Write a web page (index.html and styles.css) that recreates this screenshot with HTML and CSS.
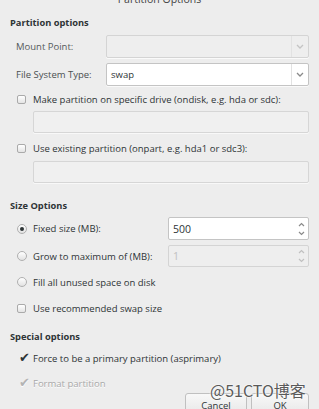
FILE: index.html
```html
<!DOCTYPE html>
<html>
<head>
<meta charset="utf-8">
<link rel="stylesheet" href="styles.css">
</head>
<body>
<div class="dialog">
  <div class="title">Partition Options</div>

  <div class="heading h1">Partition options</div>

  <div class="row r-mount">
    <span class="lbl">Mount Point:</span>
    <div class="combo disabled">
      <span class="combo-text"></span>
      <span class="combo-btn"><svg width="8" height="5" viewBox="0 0 8 5"><path d="M1 1 L4 4 L7 1" fill="none" stroke="#c4c4c4" stroke-width="1.3"/></svg></span>
    </div>
  </div>

  <div class="row r-fs">
    <span class="lbl">File System Type:</span>
    <div class="combo">
      <span class="combo-text">swap</span>
      <span class="combo-btn"><svg width="8" height="5" viewBox="0 0 8 5"><path d="M1 1 L4 4 L7 1" fill="none" stroke="#8a8a8a" stroke-width="1.3"/></svg></span>
    </div>
  </div>

  <div class="opt r-ondisk"><span class="check"></span><span>Make partition on specific drive (ondisk, e.g. hda or sdc):</span></div>
  <div class="entry e1"></div>

  <div class="opt r-onpart"><span class="check"></span><span>Use existing partition (onpart, e.g. hda1 or sdc3):</span></div>
  <div class="entry e2"></div>

  <div class="heading h2">Size Options</div>

  <div class="opt r-fixed">
    <span class="radio on"></span><span class="opt-lbl">Fixed size (MB):</span>
    <div class="spin">
      <span class="spin-text">500</span>
      <span class="spin-arrows"><svg width="7" height="16" viewBox="0 0 7 16"><path d="M1 5 L3.5 2.5 L6 5" fill="none" stroke="#8a8a8a" stroke-width="1.2"/><path d="M1 11 L3.5 13.5 L6 11" fill="none" stroke="#8a8a8a" stroke-width="1.2"/></svg></span>
    </div>
  </div>

  <div class="opt r-grow">
    <span class="radio"></span><span class="opt-lbl">Grow to maximum of (MB):</span>
    <div class="spin disabled">
      <span class="spin-text">1</span>
      <span class="spin-arrows"><svg width="7" height="16" viewBox="0 0 7 16"><path d="M1 5 L3.5 2.5 L6 5" fill="none" stroke="#c0c0c0" stroke-width="1.2"/><path d="M1 11 L3.5 13.5 L6 11" fill="none" stroke="#c0c0c0" stroke-width="1.2"/></svg></span>
    </div>
  </div>

  <div class="opt r-fill"><span class="radio"></span><span>Fill all unused space on disk</span></div>
  <div class="opt r-swap"><span class="check"></span><span>Use recommended swap size</span></div>

  <div class="heading h3">Special options</div>

  <div class="opt r-force"><span class="tick">✔</span><span>Force to be a primary partition (asprimary)</span></div>
  <div class="opt r-format dim"><span class="tick">✔</span><span>Format partition</span></div>

  <div class="buttons">
    <div class="btn b-cancel">Cancel</div>
    <div class="btn b-ok">OK</div>
  </div>
</div>
<div class="watermark">@51CTO博客</div>
</body>
</html>
```

FILE: styles.css
```css
html, body {
  margin: 0;
  padding: 0;
}
body {
  width: 319px;
  height: 409px;
  overflow: hidden;
  background: #ededed;
  font-family: "Open Sans", "Noto Sans", sans-serif;
  font-size: 9.5px;
  color: #2e3436;
  position: relative;
}
.dialog {
  padding: 0 10px;
  display: flex;
  flex-direction: column;
}
.title {
  margin-top: -8px;
  height: 14px;
  line-height: 14px;
  text-align: center;
  color: #444;
  font-size: 10.5px;
}
.heading {
  font-weight: bold;
  height: 12px;
  line-height: 12px;
  color: #2e3436;
  font-size: 9.3px;
}
.h1 { margin-top: 11px; }
.h2 { margin-top: 17px; }
.h3 { margin-top: 15px; }

.row {
  display: flex;
  align-items: center;
  height: 23px;
}
.r-mount { margin-top: 6px; }
.r-fs { margin-top: 5px; }
.lbl {
  width: 90px;
  margin-left: 6px;
  color: #4a4f50;
}
.r-mount .lbl { color: #555a5b; }

.combo {
  flex: 1;
  height: 23px;
  box-sizing: border-box;
  border: 1px solid #c4c4c4;
  border-radius: 2px;
  background: #fff;
  display: flex;
  align-items: center;
  box-shadow: 0 1px 0 #fafafa;
}
.combo.disabled {
  background: #eeeeee;
  border-color: #d4d4d4;
}
.combo-text {
  flex: 1;
  padding-left: 4px;
  color: #2e3436;
}
.combo-btn {
  width: 16px;
  height: 21px;
  border-left: 1px solid #e2e2e2;
  display: flex;
  align-items: center;
  justify-content: center;
}

.opt {
  display: flex;
  align-items: center;
  height: 16px;
  padding-left: 7px;
}
.r-ondisk { margin-top: 5px; }
.r-onpart { margin-top: 7px; }
.r-fill { margin-top: 7px; }
.r-swap { margin-top: 10px; }
.r-force { margin-top: 7px; }
.r-format { margin-top: 9px; }

.check {
  width: 9px;
  height: 9px;
  box-sizing: border-box;
  border: 1px solid #aaaaaa;
  border-radius: 2px;
  background: linear-gradient(#ffffff, #e4e4e4);
  margin-right: 7px;
  flex: none;
}
.radio {
  width: 10px;
  height: 10px;
  box-sizing: border-box;
  border: 1px solid #b0b0b0;
  border-radius: 50%;
  background: linear-gradient(#ffffff, #e2e2e2);
  margin-right: 6px;
  flex: none;
  display: flex;
  align-items: center;
  justify-content: center;
}
.radio.on::after {
  content: "";
  width: 4px;
  height: 4px;
  border-radius: 50%;
  background: #2e3436;
}
.tick {
  width: 13px;
  margin-left: 2px;
  margin-right: 1px;
  font-size: 13px;
  line-height: 14px;
  color: #2e3436;
  font-family: "DejaVu Sans", sans-serif;
}
.dim { color: #a8a8a8; text-shadow: 0 1px 0 #fff; }
.dim .tick { color: #b4b4b4; }

.entry {
  margin-left: 23px;
  height: 22px;
  box-sizing: border-box;
  border: 1px solid #d6d6d6;
  border-radius: 2px;
  background: #f0f0f0;
  box-shadow: 0 1px 0 #f8f8f8;
}
.e1 { margin-top: 4px; }
.e2 { margin-top: 5px; }

.r-fixed { margin-top: 5px; height: 23px; }
.r-grow { margin-top: 5px; height: 22px; }
.opt-lbl { width: 135px; }
.spin {
  flex: 1;
  height: 100%;
  box-sizing: border-box;
  border: 1px solid #c4c4c4;
  border-radius: 2px;
  background: #fff;
  display: flex;
  align-items: center;
}
.spin.disabled {
  background: #eeeeee;
  border-color: #d4d4d4;
}
.spin-text {
  flex: 1;
  padding-left: 4px;
  font-size: 10.5px;
}
.spin.disabled .spin-text { color: #c0c0c0; }
.spin-arrows {
  width: 14px;
  display: flex;
  justify-content: center;
}

.buttons {
  margin-top: 2px;
  display: flex;
  justify-content: flex-end;
  gap: 4px;
}
.btn {
  height: 24px;
  box-sizing: border-box;
  border: 1px solid #c0c0c0;
  border-radius: 3px;
  background: linear-gradient(#f8f8f8, #e6e6e6);
  display: flex;
  justify-content: center;
  align-items: center;
  color: #2e3436;
}
.b-cancel { width: 62px; }
.b-ok { width: 58px; }

.watermark {
  position: absolute;
  left: 210px;
  top: 381px;
  font-family: "Noto Sans CJK SC", sans-serif;
  font-size: 16px;
  line-height: 18px;
  color: #5a5a5a;
  text-shadow: 0 0 2px #fff, 0 0 2px #fff;
}
```
